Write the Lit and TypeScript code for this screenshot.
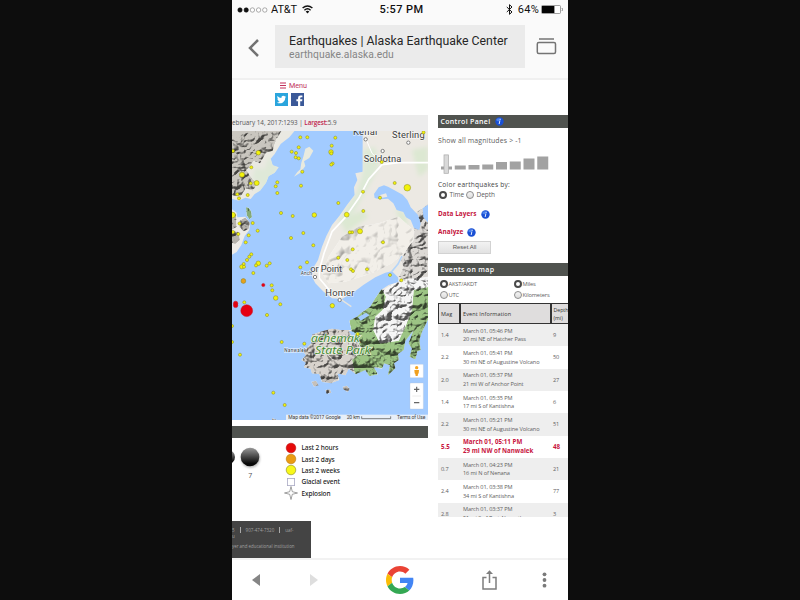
import { LitElement, html, svg, css } from "lit";
import { customElement, property } from "lit/decorators.js";
import { classMap } from "lit/directives/class-map.js";

type Quake = [x: number, y: number, r?: number, age?: "hours" | "days"];

const QUAKES: Quake[] = [
  [300.3, 137.3], [307.3, 137.3], [298.7, 147.3], [291.7, 151.7], [296, 153], [295.7, 157.3],
  [298.7, 158.3], [302.3, 171.7], [301, 185.7], [277.3, 182.3], [275.7, 186.3], [277.3, 193],
  [281, 213], [292.7, 216], [314.3, 215, 2.3], [258.3, 152.7, 2.3], [251.3, 167.3], [242, 174.7, 2.5],
  [256.7, 183, 2.5], [250.7, 183.3], [233, 151], [237.3, 194.3], [239, 198.3], [247.7, 195],
  [232.6, 215, 2.8], [335.3, 137.7], [331.7, 145.7], [331, 152, 2.3], [331.3, 153.5], [332.6, 163.5],
  [331.3, 164.6], [394.7, 183], [407.3, 187.7, 3.3], [380, 197.7], [363, 191.7], [338.3, 203],
  [346.7, 214.7, 2.4], [363.3, 211], [423.5, 132.4], [381.7, 162], [252.7, 223], [257.7, 230.7],
  [248.7, 235.3], [245.7, 242.3], [239.5, 223.5], [233, 232], [238.3, 234], [303.3, 233],
  [291, 238], [313.3, 245.3], [307, 262.3], [300.3, 267.3], [251.3, 254.3], [249.3, 256.7],
  [247, 260], [243.7, 264], [241.8, 266.8, 2.1], [244, 266.8], [258.3, 263.3, 2.3], [256, 265.4],
  [266.7, 265.7], [269.7, 263.3], [253.3, 273], [243.4, 281, 2.4, "days"], [263.3, 285, 1.6, "hours"],
  [271.7, 285.3], [272.3, 290.3], [275.7, 298, 2.3], [280.3, 304.3], [267, 315], [244.3, 302.3],
  [246.7, 310.7, 5.9, "hours"], [235.6, 303.4, 2.2, "hours"], [235.6, 305.4, 2.2, "hours"],
  [360, 231.3, 2.5], [352, 232.3], [349.8, 232.3], [383, 242.3], [352.7, 249.3], [338.3, 257.7],
  [347.3, 260], [351, 269.3], [353, 271], [367, 269.3], [390, 275], [401.3, 280.3],
  [332.3, 305.7, 2.2], [281.7, 342], [240, 354.7], [304.3, 343.7], [273.3, 392.7], [284.7, 405],
  [357.7, 334], [232, 342], [232, 326],
];

const QUAKE_FILL = { weeks: "#f2f20c", days: "#e8a01c", hours: "#e60012" };

const LAND_WEST =
  "M0 0H190L172 22 146 42 128 72 116 86 122 106 140 112 128 128 110 138 102 158 84 182 68 192 56 207 40 203 20 212 0 206Z";
const LAND_SOUTHWEST = "M0 238L14 248 16 262 40 260 54 280 52 300 38 318 28 345 14 366 0 374Z";
const ISLET = "M42 232Q52 230 58 246L60 262 52 268 44 256Z";
const KALGIN = "M220 56L232 50 244 62 232 84 216 94 220 108 205 128 186 140 196 126 205 118 208 98 214 80Z";
const KENAI =
  "M392 0V125L370 130 376 150 366 172 368 195 345 225 322 258 300 285 283 318 270 350 258 390 243 415 240 440 250 460 275 485 300 505 330 507 365 487 395 464 430 442 460 428 480 424 498 442 500 456 470 465 447 480 430 505 415 530 390 547 375 560 352 572 358 600 325 600 300 596 270 604 240 614 238 640 214 665 222 676 208 690 222 698 216 712 236 716 240 730 262 732 270 755 284 744 300 758 322 750 316 730 340 736 350 716 372 732 400 720 412 738 438 733 425 712 450 716 456 700 474 706 468 736 490 715 486 700 500 690 498 672 515 660 520 632 545 600 530 640 540 656 533 680 550 688 556 664 566 660 562 630 570 605 592 560V0Z";
const LAKE =
  "M426 192L440 172 456 166 468 170 486 180 512 194 526 210 536 232 558 255 566 280 562 300 546 294 536 270 522 262 514 246 494 240 484 220 468 206 444 208 428 204Z";

@customElement("info-dot")
class InfoDot extends LitElement {
  static styles = css`
    :host { display: inline-flex; width: 9px; height: 9px; }
    svg { width: 9px; height: 9px; display: block; }
  `;
  render() {
    return html`<svg viewBox="0 0 18 18">
      <circle cx="9" cy="9" r="8.4" fill="#1a50d4" />
      <ellipse cx="7" cy="5.500" rx="4.500" ry="3.200" fill="#4a82ee" />
      <path d="M10.300 3.400v2.300M9.700 7.500L8.300 14" stroke="#e6eefc" stroke-width="2" fill="none" />
    </svg>`;
  }
}

@customElement("radio-option")
class RadioOption extends LitElement {
  @property({ type: Boolean }) checked = false;
  static styles = css`
    :host { display: flex; align-items: center; height: 11px; }
    .knob { box-sizing: border-box; width: 8px; height: 8px; border-radius: 50%; border: 1px solid #8d8d8d; background: linear-gradient(#f4f4f4, #ddd); flex: none; }
    .on { border: 2.3px solid #4a4a4a; background: #fff; }
  `;
  render() {
    return html`<span class=${classMap({ knob: true, on: this.checked })}></span><slot></slot>`;
  }
}

@customElement("quake-map")
class QuakeMap extends LitElement {
  static styles = css`
    :host { display: block; width: 196px; height: 289px; overflow: hidden; }
    svg { display: block; width: 196px; height: 289px; }
    .place { font-family: Roboto, "Noto Sans", sans-serif; fill: #404040; stroke: #fff; stroke-width: 4px; stroke-opacity: .6; paint-order: stroke; }
    .park { font: italic 500 34px "Open Sans", "Noto Sans", sans-serif; fill: #3f8a30; stroke: #f3f8ea; stroke-width: 5px; stroke-opacity: .8; paint-order: stroke; }
    .credit { font: 15px Roboto, sans-serif; fill: #3c3c3c; }
  `;
  render() {
    const town = (x: number, y: number) => svg`<circle cx=${x} cy=${y} r="5" fill="#fff" stroke="#666" stroke-width="2.4" />`;
    return html`<svg viewBox="0 3 588 867">
      <defs>
        <filter id="relief" x="0" y="0" width="1" height="1" color-interpolation-filters="sRGB">
          <feTurbulence type="turbulence" baseFrequency="0.024 0.028" numOctaves="3" seed="8" />
          <feDiffuseLighting surfaceScale="23" diffuseConstant="1.36" lighting-color="#fff" result="lit">
            <feDistantLight azimuth="225" elevation="52" />
          </feDiffuseLighting>
          <feComponentTransfer in="lit" result="lit">
            <feFuncR type="linear" slope=".7" intercept=".34" />
            <feFuncG type="linear" slope=".7" intercept=".34" />
            <feFuncB type="linear" slope=".7" intercept=".34" />
          </feComponentTransfer>
          <feBlend in="lit" in2="SourceGraphic" mode="multiply" result="mix" />
          <feComposite in="mix" in2="SourceAlpha" operator="in" />
        </filter>
        <filter id="hills" x="0" y="0" width="1" height="1" color-interpolation-filters="sRGB">
          <feTurbulence type="turbulence" baseFrequency="0.012" numOctaves="3" seed="21" />
          <feDiffuseLighting surfaceScale="7" diffuseConstant="1.24" lighting-color="#fff" result="lit">
            <feDistantLight azimuth="225" elevation="56" />
          </feDiffuseLighting>
          <feBlend in="lit" in2="SourceGraphic" mode="multiply" result="mix" />
          <feComposite in="mix" in2="SourceAlpha" operator="in" />
        </filter>
        <filter id="soft"><feGaussianBlur stdDeviation="7" /></filter>
        <clipPath id="kenai"><path d=${KENAI} /></clipPath>
        <clipPath id="west"><path d=${LAND_WEST} /></clipPath>
      </defs>
      <rect y="0" width="588" height="873" fill="#a2cbff" />

      <path d=${LAND_WEST} fill="#eae9e2" />
      <g clip-path="url(#west)">
        <path d="M110 80L96 120 70 110 60 150 90 160 70 190 110 180 140 110Z" fill="#dfe9d8" filter="url(#soft)" />
        <path d="M0 0H150L132 30 122 62 102 68 84 100 66 92 44 120 60 146 78 160 62 182 40 176 26 200 0 196Z" fill="#c9c6bf" filter="url(#relief)" />
      </g>
      <path d=${LAND_SOUTHWEST} fill="#eeece8" />
      <path d="M0 245L12 252 14 290 0 300ZM22 272L40 262 53 278 50 298 34 304 22 292ZM0 302L20 306 24 330 10 342 0 340Z" fill="#b5b2ac" filter="url(#relief)" />
      <path d=${ISLET} fill="#86ab78" filter="url(#relief)" />
      <path d=${KALGIN} fill="#e9eadf" />

      <path d=${KENAI} fill="#ece9e3" />
      <g clip-path="url(#kenai)">
        <g filter="url(#soft)">
          <path d="M392 60L392 130 372 190 320 270 330 290 370 240 420 150 440 110 430 50Z" fill="#dde9d6" />
          <path d="M540 60L588 50V120L560 140ZM490 235L520 250 530 290 505 280ZM400 370L430 360 425 420 405 410ZM330 270L390 240 410 260 340 310Z" fill="#dce8d2" />
        </g>
        <path d="M330 320L380 290 440 280 500 260 545 300 540 350 480 400 420 430 340 455 290 460 270 430 290 380Z" fill="#f2efe9" filter="url(#hills)" />
        <path d="M550 250L592 220V560L570 500 555 470 520 455 500 440 515 410 505 390 530 350 545 330Z" fill="#dcd9d5" filter="url(#relief)" />
        <path d="M500 450L592 440V570L560 540 520 600 500 650 440 640 400 590 420 540 440 490Z" fill="#f6f6f6" filter="url(#relief)" />
        <path d="M205 690L200 655 240 635 240 608 300 594 350 600 380 640 390 690 370 740 318 740 322 765 260 765 200 740Z" fill="#d8d3cd" filter="url(#relief)" />
        <path d="M350 565L400 540 432 500 448 474 462 500 452 540 430 560 424 600 444 640 500 632 520 590 540 540 545 480 592 470V600L566 695 530 695 525 640 505 700 470 745 460 716 430 712 440 745 370 740 360 690 392 660 360 610Z" fill="#9cc484" filter="url(#relief)" />
        <g fill="none" stroke="#fff" stroke-width="5" stroke-linejoin="round">
          <path d="M592 98H500L450 104 410 148 380 205 340 262 300 305 276 370 262 420 262 445 300 490 330 500" />
          <path d="M400 22L420 70 450 98" stroke-width="3" />
        </g>
        <path d="M478 426L498 402 510 378" fill="none" stroke="#b5d5f8" stroke-width="5" />
      </g>
      <path d=${LAKE} fill="#a2cbff" />
      <path d="M442 196L462 190 466 200 448 204Z" fill="#ece9e3" />
      <path d="M572 235L592 222V282L574 262ZM378 562L402 548 412 556 386 572ZM350 602L366 606 384 640 372 636Z" fill="#a2cbff" />
      <path d="M322 505L358 530" stroke="#e5e3de" stroke-width="4" />
      <path d="M238 755L252 752 260 766 246 770ZM268 742L300 735 316 745 298 760 270 756ZM280 780L294 778 298 788 284 791ZM332 770L345 767 354 778 346 786 334 778ZM120 864L136 870H120Z" fill="#c5c0ba" filter="url(#relief)" />

      ${town(401, 28)}${town(529, 38)}${town(452, 63)}${town(249, 441)}${town(323, 510)}
      <g class="place" font-size="28">
        <text x="363" y="14" textLength="73">Kenai</text>
        <text x="480" y="25" textLength="98">Sterling</text>
        <text x="395" y="97" textLength="113">Soldotna</text>
        <text x="235" y="427" textLength="95">or Point</text>
        <text x="280" y="497" textLength="87">Homer</text>
        <text x="206" y="435" font-size="15" textLength="34">Anch</text>
        <text x="157" y="665" font-size="14" textLength="66">Nanwalek</text>
      </g>
      <g class="park">
        <text x="237" y="635" textLength="146" lengthAdjust="spacingAndGlyphs">achemak</text>
        <text x="249" y="672" textLength="167" lengthAdjust="spacingAndGlyphs">State Park</text>
      </g>

      <g transform="scale(3) translate(-232 -130)">
        ${QUAKES.map(([x, y, r = 1.55, age = "weeks"]) => svg`<circle cx=${x} cy=${y} r=${r}
          fill=${QUAKE_FILL[age]} stroke=${age === "hours" ? "#c8101c" : "#86861c"} stroke-width=".5" />`)}
      </g>

      <g fill="#fff" stroke="#b9c6d6" stroke-width="1">
        <rect x="534" y="703" width="40" height="40" rx="2" />
        <rect x="534" y="759" width="40" height="78" rx="2" />
      </g>
      <path d="M541 798H567" stroke="#e2e2e2" stroke-width="2" />
      <circle cx="554" cy="713" r="5" fill="#f5a623" />
      <path d="M547 720h14l-1 10-2 2-1 6h-6l-1-6-2-2Z" fill="#f0a01e" />
      <path d="M546 778h16M554 770v16M546 818h16" stroke="#666" stroke-width="3.6" />

      <rect x="162" y="854" width="426" height="19" fill="#f3f5f7" fill-opacity=".86" />
      <g class="credit">
        <text x="169" y="868" textLength="157">Map data ©2017 Google</text>
        <text x="344" y="868" textLength="40">20 km</text>
        <text x="495" y="868" textLength="85">Terms of Use</text>
      </g>
      <path d="M389 859v7h87v-7" fill="none" stroke="#555" stroke-width="2.2" />
    </svg>`;
  }
}

interface EventRow { mag: string; time: string; place: string; depth: string; major?: boolean }

const EVENTS: EventRow[] = [
  { mag: "1.4", time: "March 01, 05:46 PM", place: "20 mi NE of Hatcher Pass", depth: "9" },
  { mag: "2.2", time: "March 01, 05:41 PM", place: "30 mi NE of Augustine Volcano", depth: "50" },
  { mag: "2.0", time: "March 01, 05:37 PM", place: "21 mi W of Anchor Point", depth: "27" },
  { mag: "1.4", time: "March 01, 05:35 PM", place: "17 mi S of Kantishna", depth: "6" },
  { mag: "2.2", time: "March 01, 05:21 PM", place: "30 mi NE of Augustine Volcano", depth: "51" },
  { mag: "5.5", time: "March 01, 05:11 PM", place: "29 mi NW of Nanwalek", depth: "48", major: true },
  { mag: "0.7", time: "March 01, 04:23 PM", place: "16 mi N of Nenana", depth: "21" },
  { mag: "2.4", time: "March 01, 03:38 PM", place: "34 mi S of Kantishna", depth: "77" },
  { mag: "2.8", time: "March 01, 03:37 PM", place: "51 mi S of Port Alsworth", depth: "3" },
];

@customElement("control-panel")
class ControlPanel extends LitElement {
  static styles = css`
    :host { display: block; width: 130px; height: 406px; overflow: hidden; color: #606060; font: 6.3px/8px "Open Sans", "Noto Sans", sans-serif; white-space: nowrap; }
    .bar { height: 13px; background: #50534f; color: #fff; font-size: 7px; font-weight: 600; letter-spacing: .32px; display: flex; align-items: center; gap: 5px; padding-left: 2.5px; }
    .show { margin-top: 8px; height: 9px; line-height: 9px; font-size: 6.9px; letter-spacing: .15px; }
    .slider { margin-top: 9px; height: 26px; width: 116px; display: block; }
    .by { margin-top: 1px; height: 9px; font-size: 6.6px; letter-spacing: .22px; color: #444; font-weight: 500; }
    .radios { display: flex; gap: 2px; padding-left: 1px; margin-top: 0; height: 10px; font-size: 6.5px; }
    .radios radio-option { height: 9px; gap: 2.5px; letter-spacing: -.08px; }
    .link { display: flex; align-items: center; gap: 4px; height: 10px; font-size: 6.4px; letter-spacing: .06px; font-weight: 700; color: #c41640; }
    .layers { margin-top: 9px; }
    .analyze { margin-top: 8px; }
    .reset { box-sizing: border-box; width: 53px; height: 13px; margin-top: 4px; border: 1px solid #d2d2d2; background: linear-gradient(#f2f2f2, #e2e2e2); font: 6px/11px "Liberation Sans", sans-serif; text-align: center; color: #555; }
    .events { margin-top: 9px; }
    .units { display: grid; grid-template-columns: 74px 1fr; align-content: start; padding: 3px 0 0 2px; height: 27px; box-sizing: border-box; font-size: 5.7px; letter-spacing: -.14px; }
    .units radio-option { height: 10.5px; gap: .5px; }
    .head, .row { display: grid; grid-template-columns: 22px 91px 17px; }
    .head { box-sizing: border-box; height: 21px; background: #dfdddd; border: 1px solid #333; border-width: 1px 0 1px 1px; color: #333; font-size: 5.5px; letter-spacing: .12px; line-height: 8px; font-weight: 500; }
    .head span { display: flex; align-items: center; padding-left: 2px; border-right: 2px solid #333; }
    .head span:last-child { border: 0; padding-left: 1.5px; font-size: 5.2px; letter-spacing: 0; }
    .row { height: 22.35px; align-items: center; font-size: 5.6px; line-height: 8.6px; letter-spacing: -.11px; background: #fff; }
    .row:nth-child(odd) { background: #eee; }
    .row span { padding-left: 3px; }
    .row .depth { padding-left: 2px; }
    .row.major { color: #c8143e; font-weight: 700; font-size: 6.2px; letter-spacing: .02px; }
    .list { height: 192.5px; overflow: hidden; }
  `;
  render() {
    const bars = [3, 4, 4.5, 5, 7.5, 8, 11, 13];
    return html`
      <div class="bar">Control Panel <info-dot></info-dot></div>
      <div class="show">Show all magnitudes &gt; -1</div>
      <svg class="slider" viewBox="0 0 116 26">
        ${bars.map((h, i) => svg`<rect x=${3 + i * 13.75} y=${15.5 - h} width="11" height=${h} fill="#a2a2a2" />`)}
        <rect x="6" y=".9" width="4.600" height="18.400" fill="#d9d9d9" stroke="#aaa" stroke-width=".7" />
      </svg>
      <div class="by">Color earthquakes by:</div>
      <div class="radios"><radio-option checked>Time</radio-option><radio-option>Depth</radio-option></div>
      <div class="link layers">Data Layers <info-dot></info-dot></div>
      <div class="link analyze">Analyze <info-dot></info-dot></div>
      <div class="reset">Reset All</div>
      <div class="bar events">Events on map</div>
      <div class="units">
        <radio-option checked>AKST/AKDT</radio-option><radio-option checked>Miles</radio-option>
        <radio-option>UTC</radio-option><radio-option>Kilometers</radio-option>
      </div>
      <div class="head"><span>Mag</span><span>Event Information</span><span>Depth<br />(mi)</span></div>
      <div class="list">
        ${EVENTS.map((e) => html`<div class=${classMap({ row: true, major: !!e.major })}>
          <span>${e.mag}</span><span>${e.time}<br />${e.place}</span><span class="depth">${e.depth}</span>
        </div>`)}
      </div>
    `;
  }
}

@customElement("map-legend")
class MapLegend extends LitElement {
  static styles = css`
    :host { display: flex; height: 83px; overflow: hidden; }
    .spheres { width: 52px; height: 60px; flex: none; }
    .num { font: 7px "Open Sans", sans-serif; fill: #555; }
    .keys { display: flex; flex-direction: column; padding-top: 4px; }
    .key { display: flex; align-items: center; height: 11.4px; gap: 3.5px; font: 500 6.5px "Noto Sans", sans-serif; color: #1c1c1c; letter-spacing: -.1px; white-space: nowrap; }
    .key svg { width: 14px; height: 14px; flex: none; }
  `;
  render() {
    const item = (shape: unknown, text: string) =>
      html`<div class="key"><svg viewBox="0 0 14 14">${shape}</svg>${text}</div>`;
    const dot = (fill: string, edge: string) => svg`<circle cx="7" cy="7" r="4.8" fill=${fill} stroke=${edge} stroke-width=".6" />`;
    return html`
      <svg class="spheres" viewBox="0 0 52 60">
        <defs><linearGradient id="ball" x2="0" y2="1"><stop offset="0" stop-color="#999" /><stop offset=".5" stop-color="#444" /><stop offset=".85" stop-color="#080808" /></linearGradient>
        <filter id="shade" x="-.3" y="-.3" width="1.6" height="1.6"><feGaussianBlur stdDeviation="1" /></filter></defs>
        <circle cx="18.5" cy="20.5" r="9.5" fill="#bbb" filter="url(#shade)" />
        <circle cx="-4" cy="19" r="7" fill="url(#ball)" />
        <circle cx="18" cy="19" r="9.3" fill="url(#ball)" />
        <text class="num" x="16.3" y="40">7</text>
      </svg>
      <div class="keys">
        ${item(dot("#e60a0a", "#b11"), "Last 2 hours")}
        ${item(dot("#eb9c12", "#b87a18"), "Last 2 days")}
        ${item(dot("#f8f81a", "#88882a"), "Last 2 weeks")}
        ${item(svg`<rect x="3.4" y="3.4" width="7.2" height="7.2" fill="#fff" stroke="#a9a9c4" stroke-width=".8" />`, "Glacial event")}
        ${item(svg`<path d="M7 .5L8.3 5.7 13.5 7 8.3 8.3 7 13.5 5.7 8.3 .5 7 5.7 5.7Z" fill="#fff" stroke="#666" stroke-width=".6" />`, "Explosion")}
      </div>
    `;
  }
}

@customElement("app-root")
class AppRoot extends LitElement {
  static styles = css`
    :host { display: flex; justify-content: center; width: 800px; height: 600px; background: #0d0d0d; overflow: hidden; }
    .phone { width: 336px; height: 600px; display: flex; flex-direction: column; background: #fff; overflow: hidden; }
    svg { display: block; flex: none; }
    .status { height: 19px; background: #fafafa; display: grid; grid-template-columns: 1fr auto 1fr; align-items: center; font: 500 11px Roboto, "Noto Sans", sans-serif; color: #111; }
    .carrier { display: flex; align-items: center; gap: 3px; padding-left: 5px; font-weight: 400; }
    .carrier .name { letter-spacing: -.1px; margin-right: 2px; }
    .clock { letter-spacing: .4px; padding-left: 3px; }
    .power { display: flex; justify-content: flex-end; align-items: center; gap: 2px; padding-right: 5px; font-weight: 400; }
    .power .num { letter-spacing: .3px; }
    .power .bt { margin-right: 3px; }
    .toolbar { height: 61px; box-sizing: border-box; background: #fafafa; border-bottom: 2px solid #f0f0f0; display: flex; padding-top: 6px; }
    .back { margin: 14px 0 0 16px; }
    .omni { margin-left: 16px; width: 250px; height: 43px; box-sizing: border-box; padding: 9px 0 0 14px; background: #ebebeb; font-family: Roboto, "Noto Sans", sans-serif; white-space: nowrap; }
    .title { font-size: 12.3px; line-height: 14.5px; color: #262626; }
    .url { font-size: 10.3px; line-height: 12px; color: #858585; letter-spacing: .05px; }
    .tabs { margin: 13px 0 0 11px; }
    .page { height: 478px; background: #fff; overflow: hidden; }
    .top { height: 35px; box-sizing: border-box; padding: 1px 0 0 43px; }
    .menu { display: flex; align-items: center; gap: 3px; padding-left: 5px; height: 9px; font: 7.2px Roboto, sans-serif; color: #c2315b; }
    .social { display: flex; gap: 3px; margin-top: 3px; }
    .columns { display: flex; gap: 10px; }
    .left { width: 196px; }
    .summary { height: 16px; background: #ececec; font: 6.3px/16px "Open Sans", "Noto Sans", sans-serif; color: #555; white-space: nowrap; letter-spacing: 0; overflow: hidden; }
    .summary b { color: #bf1c4b; font-weight: 600; letter-spacing: -.1px; }
    .strip { height: 12px; margin-top: 6px; background: #50534f; }
    .footer { width: 79px; height: 39px; background: #444; color: #a2a2a2; font: 4.5px/6px "Open Sans", sans-serif; white-space: nowrap; overflow: hidden; box-sizing: border-box; padding: 6px 0 0 0; }
    .contact { display: flex; align-items: center; gap: 5px; height: 6px; }
    .contact i { width: 1px; height: 6px; background: #aaa; }
    .eeo { margin-top: 3.5px; font-size: 4.4px; }
    .nav { height: 42px; box-sizing: border-box; border-top: 2px solid #f2f2f2; background: #fff; display: flex; align-items: center; }
    .prev { margin-left: 20px; }
    .next { margin-left: 50px; }
    .g { margin-left: 68px; }
    .share { margin-left: 68px; }
    .more { margin-left: 45px; }
  `;
  render() {
    return html`<div class="phone">
      <div class="status">
        <div class="carrier">
          <svg width="31" height="6" viewBox="0 0 31 6">
            ${[3, 9.2, 15.4, 21.6, 27.8].map((x, i) => svg`<circle cx=${x} cy="3" r="2.2" fill=${i < 2 ? "#111" : "#fff"} stroke=${i < 2 ? "#111" : "#777"} stroke-width=".6" />`)}
          </svg>
          <span class="name">AT&amp;T</span>
          <svg width="11" height="9" viewBox="0 0 11 9" fill="none" stroke="#111" stroke-width="1.4">
            <path d="M.6 3.1Q5.5-1.3 10.4 3.1M2.4 5.2Q5.5 2.5 8.6 5.2" /><path d="M3.7 6.4Q5.5 5.1 7.3 6.4L5.5 8.6Z" fill="#111" stroke="none" />
          </svg>
        </div>
        <div class="clock">5:57 PM</div>
        <div class="power">
          <svg class="bt" width="7" height="11" viewBox="0 0 7 11"><path d="M.8 3L6 8 3.5 10.3V.7L6 3 .8 8" fill="none" stroke="#111" stroke-width="1" /></svg>
          <span class="num">64%</span>
          <svg width="22" height="9" viewBox="0 0 22 9"><rect x=".5" y=".5" width="19" height="8" rx="1" fill="#fff" stroke="#777" stroke-width=".7" /><rect x="1" y="1" width="12.4" height="7" fill="#050505" /><path d="M21 3q1 1.5 0 3" stroke="#888" fill="none" /></svg>
        </div>
      </div>
      <div class="toolbar">
        <svg class="back" width="11" height="18" viewBox="0 0 11 18"><path d="M10 1L2 9 10 17" fill="none" stroke="#727272" stroke-width="2.5" /></svg>
        <div class="omni"><div class="title">Earthquakes | Alaska Earthquake Center</div><div class="url">earthquake.alaska.edu</div></div>
        <svg class="tabs" width="21" height="17" viewBox="0 0 21 17" fill="none" stroke="#747474" stroke-width="1.5"><path d="M3 1H18" /><rect x="1.300" y="4.600" width="18.200" height="11" rx="1.500" /></svg>
      </div>
      <div class="page">
        <div class="top">
          <div class="menu"><svg width="6" height="7" viewBox="0 0 6 7"><path d="M0 1H6M0 3.5H6M0 6H6" stroke="#c2315b" /></svg>Menu</div>
          <div class="social">
            <svg width="13" height="13" viewBox="0 0 24 24"><rect width="24" height="24" fill="#2aa5dd" /><path transform="translate(3.500 3.500) scale(.71)" fill="#fff" d="M23.950 4.570a10 10 0 0 1-2.820.770 4.960 4.960 0 0 0 2.160-2.720c-.950.550-2 .950-3.130 1.180a4.920 4.920 0 0 0-8.380 4.480C7.690 8.100 4.070 6.130 1.640 3.160a4.820 4.820 0 0 0-.670 2.480c0 1.710.870 3.210 2.190 4.100a4.900 4.900 0 0 1-2.230-.620v.060a4.920 4.920 0 0 0 3.950 4.830 5 5 0 0 1-2.210.080 4.940 4.940 0 0 0 4.600 3.420A9.870 9.870 0 0 1 0 19.540a14 14 0 0 0 7.550 2.210c9.050 0 14-7.500 14-13.980l-.020-.640a9.940 9.940 0 0 0 2.420-2.560z" /></svg>
            <svg width="13" height="13" viewBox="0 0 24 24"><rect width="24" height="24" fill="#3b5998" /><path d="M13 24V15H10V11.5H13V9Q13 4.500 17.500 4.500H21V8H18.500Q17 8 17 9.500V11.500H21L20.500 15H17V24Z" fill="#fff" /></svg>
          </div>
        </div>
        <div class="columns">
          <div class="left">
            <div class="summary">ebruary 14, 2017:1293 | <b>Largest:</b>5.9</div>
            <quake-map></quake-map>
            <div class="strip"></div>
            <map-legend></map-legend>
            <div class="footer">
              <div class="contact"><span>5</span><i></i><span>907-474-7320</span><i></i><span>uaf-</span></div>
              <div>u</div>
              <div class="eeo">yer and educational institution</div>
            </div>
          </div>
          <control-panel></control-panel>
        </div>
      </div>
      <div class="nav">
        <svg class="prev" width="8" height="12" viewBox="0 0 8 12"><path d="M8 0V12L0 6Z" fill="#858585" /></svg>
        <svg class="next" width="8" height="12" viewBox="0 0 8 12"><path d="M0 0V12L8 6Z" fill="#dedede" /></svg>
        <svg class="g" width="28" height="28" viewBox="0 0 48 48">
          <path fill="#EA4335" d="M24 9.500c3.540 0 6.710 1.220 9.210 3.600l6.850-6.850C35.900 2.380 30.470 0 24 0 14.620 0 6.510 5.380 2.560 13.220l7.980 6.190C12.430 13.720 17.740 9.500 24 9.500z" />
          <path fill="#4285F4" d="M46.980 24.550c0-1.570-.150-3.090-.380-4.550H24v9.020h12.940c-.580 2.960-2.260 5.480-4.780 7.180l7.730 6c4.510-4.180 7.090-10.360 7.090-17.650z" />
          <path fill="#FBBC05" d="M10.530 28.590c-.480-1.450-.760-2.990-.760-4.590s.270-3.140.760-4.590l-7.980-6.190C.920 16.460 0 20.120 0 24s.920 7.540 2.560 10.780l7.970-6.190z" />
          <path fill="#34A853" d="M24 48c6.480 0 11.930-2.130 15.890-5.810l-7.730-6c-2.150 1.450-4.920 2.300-8.160 2.300-6.260 0-11.570-4.220-13.470-9.910l-7.980 6.190C6.510 42.620 14.620 48 24 48z" />
        </svg>
        <svg class="share" width="15" height="20" viewBox="0 0 15 20" fill="none" stroke="#7e7e7e" stroke-width="1.500"><path d="M4.500 7.500H1V19H14V7.500H10.500M7.500 13V2" /><path d="M7.500 .2L11 4H4Z" fill="#7e7e7e" stroke="none" /></svg>
        <svg class="more" width="5" height="16" viewBox="0 0 5 16" fill="#7a7a7a"><circle cx="2.500" cy="2.300" r="1.900" /><circle cx="2.500" cy="8" r="1.900" /><circle cx="2.500" cy="13.700" r="1.900" /></svg>
      </div>
    </div>`;
  }
}
